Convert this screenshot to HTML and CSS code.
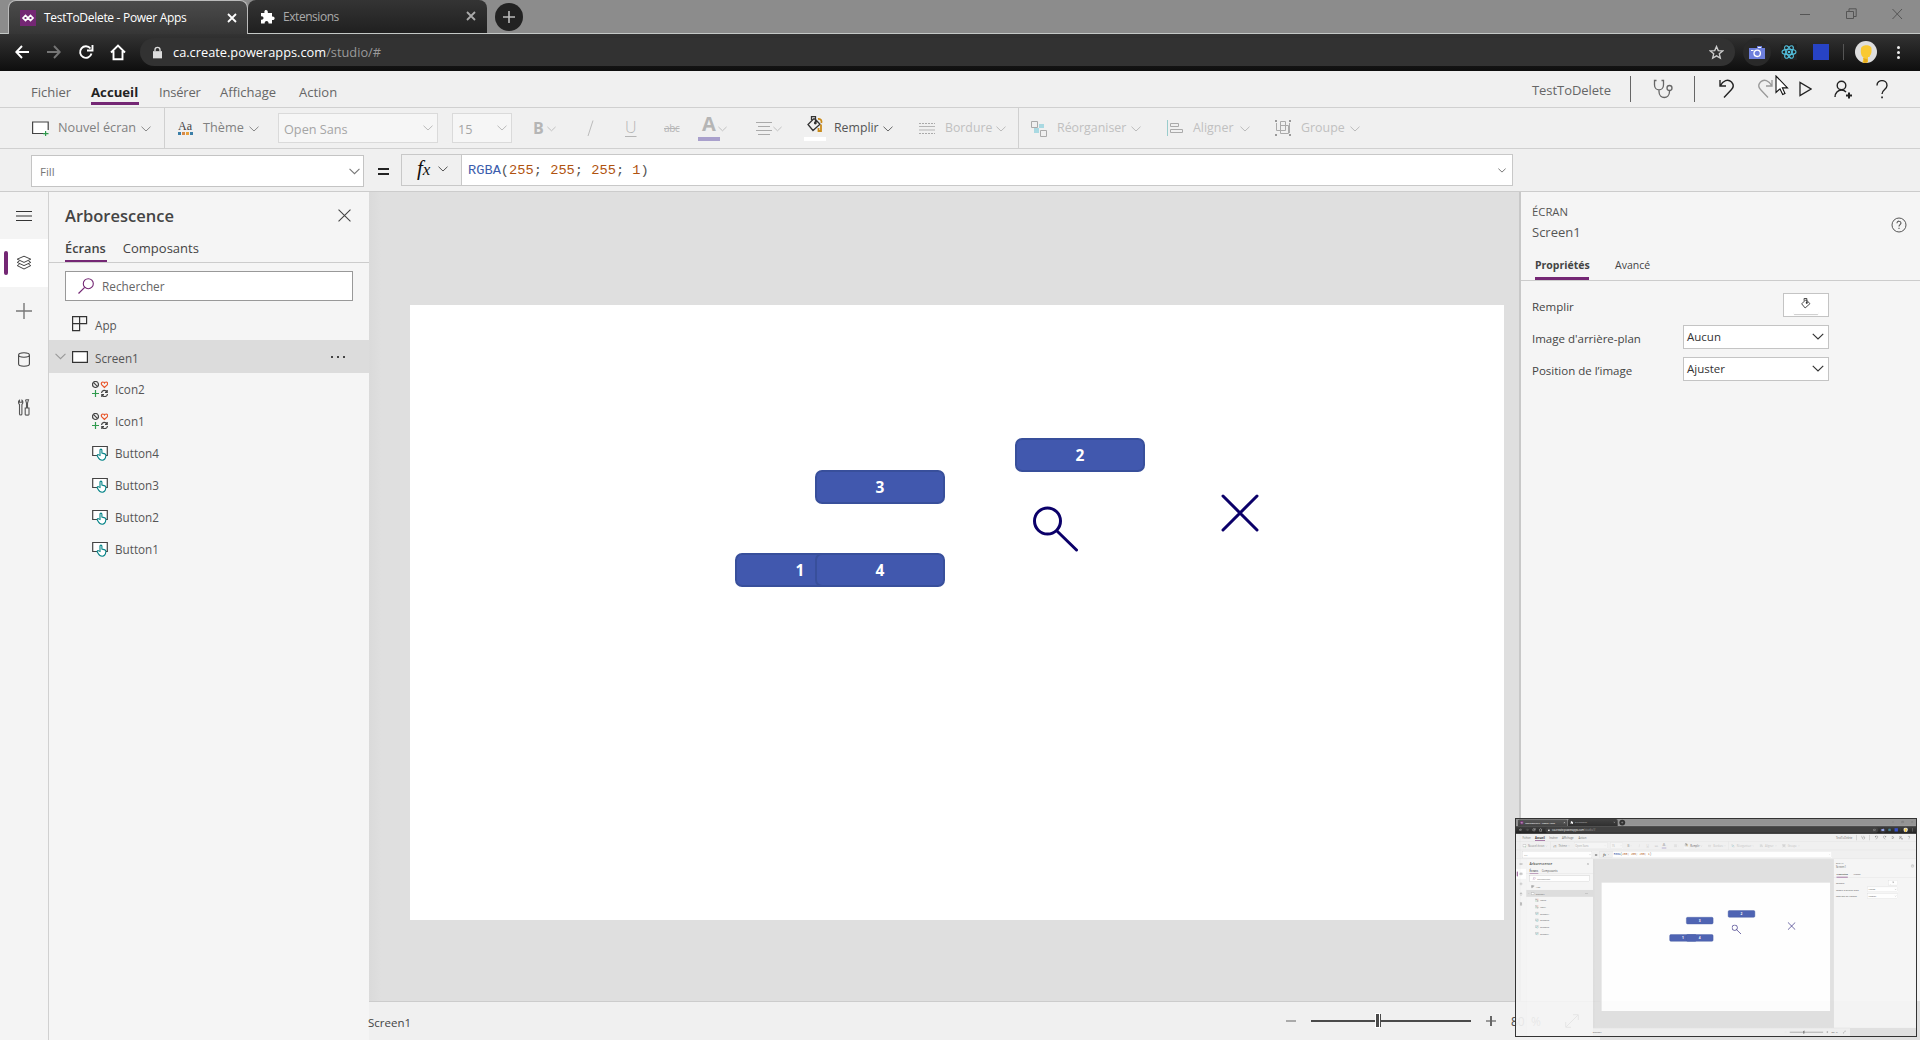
FILE: index.html
```html
<!DOCTYPE html>
<html lang="fr">
<head>
<meta charset="utf-8">
<title>TestToDelete - Power Apps</title>
<link rel="stylesheet" href="styles.css">
</head>
<body>
<svg class="defs" width="0" height="0">
  <symbol id="chev" viewBox="0 0 10 6"><path d="M.5.7 5 5 9.500.7" fill="none" stroke="currentColor" stroke-width="1"/></symbol>
  <symbol id="x" viewBox="0 0 12 12"><path d="M.5.5l11 11M11.500.5l-11 11" fill="none" stroke="currentColor" stroke-width="1"/></symbol>
  <symbol id="xb" viewBox="0 0 10 10"><path d="M1 1l8 8M9 1l-8 8" fill="none" stroke="currentColor" stroke-width="1.8"/></symbol>
  <symbol id="btn" viewBox="0 0 16 16"><path d="M6 10.500H.7V1.500h14.600v9H14" fill="#fff" stroke="#444" stroke-width="1.200"/><path d="M8 10.500V5.200c0-1.500 1.900-1.500 1.900 0V8l3 .9c1 .3 1.100 1 .9 2-.2 2.200-1 4.300-3.600 4.300-2.400 0-3.200-1.100-4-2.700l-1-1.700c-.3-1 .8-1.500 1.500-.9z" fill="#fff" stroke="#038387" stroke-width="1.100"/></symbol>
  <symbol id="ico" viewBox="0 0 16 16"><g fill="none" stroke-width="1.200"><circle cx="3.500" cy="3.500" r="3" stroke="#444"/><path d="M1.400 1.400l4.200 4.200" stroke="#444"/><path d="M12.500 6.500L9.600 3.600C8.900 2.500 9.700.9 11 1c.8 0 1.300.6 1.500 1 .2-.4.7-1 1.500-1 1.300-.1 2.100 1.500 1.400 2.600z" stroke="#e8562a"/><path d="M3.500 9v7M0 12.500h7" stroke="#2f9a4d"/><path d="M9.500 12c.4-3 4-3.500 5.500-1M15.200 9v2.300H13M15.500 13c-.4 3-4 3.500-5.500 1M9.800 16v-2.300H12" stroke="#444"/></g></symbol>
  <symbol id="bucket" viewBox="0 0 16 16"><path d="M4.500 4V.7h4V8M6.500 3L1 8.500l5 6 7-6.200-5-5.300z" fill="none" stroke="currentColor" stroke-width="1.300"/><circle cx="8.300" cy="7" r="1.400" fill="currentColor"/></symbol>
</svg>

<div class="app">
  <div class="titlebar">
    <div class="tab tab-on">
      <svg class="fav" width="16" height="16" viewBox="0 0 16 16"><rect width="16" height="16" fill="#742774"/><path d="M3 8l2.500-2.500L8 8l-2.500 2.500zM8 8l2.500-2.500L13 8l-2.500 2.500z" fill="none" stroke="#fff" stroke-width="1.700"/></svg>
      <span class="t-tab1">TestToDelete - Power Apps</span>
      <svg class="tab-x" width="10" height="10"><use href="#xb"/></svg>
    </div>
    <div class="tab tab-off">
      <svg width="15" height="15" viewBox="0 0 15 15"><path d="M1 4h3.500C3.500 0 8.500 0 7.800 4H12v3.500c3.500-.8 3.500 4.300 0 3.500V14.500H8.500c.6-3.500-4.400-3.500-3.800 0H1V10.800c3.300.6 3.300-4 0-3.400z" fill="#fff"/></svg>
      <span class="t-tab2">Extensions</span>
      <svg class="tab-x" width="10" height="10"><use href="#xb"/></svg>
    </div>
    <div class="newtab"><svg width="12" height="12" viewBox="0 0 12 12"><path d="M6 0v12M0 6h12" stroke="#bbb" stroke-width="1.600"/></svg></div>
    <svg class="winctl" width="104" height="12" viewBox="0 0 104 12"><g fill="none" stroke="#555"><path d="M0 6.500h10"/><path d="M46.500 3.500h7v7h-7zM49 3V.8h7.200v7.700H54"/><path d="M92.500 1l9.500 10M102 1l-9.500 10"/></g></svg>
  </div>

  <div class="navbar">
    <svg class="navicons" width="112" height="18" viewBox="0 0 112 18"><g fill="none" stroke-width="1.900"><path d="M14 9H1.500M7 3L1.300 9 7 15" stroke="#fff"/><path d="M32 9h12.500M39 3l5.700 6L39 15" stroke="#757575"/><path d="M75.500 5.500A5.800 5.800 0 1 0 76.500 10.500M77.500 2v5.500H72" stroke="#fff"/><path d="M96 9.500L103 2.500l7 7M98.500 8v8.300h9V8" stroke="#fff"/></g></svg>
    <div class="address">
      <svg width="9" height="13" viewBox="0 0 10 13"><path d="M0 5h10v8H0z" fill="#ddd"/><path d="M2.200 5V3.500c0-3.500 5.600-3.500 5.600 0V5" fill="none" stroke="#ddd" stroke-width="1.500"/></svg>
      <span class="t-url">ca.create.powerapps.com<i>/studio/#</i></span>
      <svg class="star" width="15" height="15" viewBox="0 0 24 24"><path d="M12 2.500l2.800 6.400 7 .6-5.300 4.600 1.600 6.900L12 17.300 5.900 21l1.600-6.900L2.200 9.500l7-.6z" fill="none" stroke="#ccc" stroke-width="2.200"/></svg>
    </div>
    <div class="camera"><svg width="16" height="13" viewBox="0 0 16 13"><path d="M0 2h8V0h5v2h3v11H0z" fill="#6d7fdc"/><circle cx="8.200" cy="7.300" r="3.200" fill="none" stroke="#fff" stroke-width="1.300"/><path d="M2 4.500h2.500M9 1.500h3" stroke="#fff"/></svg></div>
    <svg class="react" width="16" height="16" viewBox="-8 -8 16 16"><rect x="-8" y="-8" width="16" height="16" fill="#222"/><g fill="none" stroke="#53c1de" stroke-width="1.100"><ellipse rx="7" ry="2.700"/><ellipse rx="7" ry="2.700" transform="rotate(60)"/><ellipse rx="7" ry="2.700" transform="rotate(120)"/></g><circle r="1.300" fill="#53c1de"/></svg>
    <div class="bluesq"></div>
    <div class="navsep"></div>
    <svg class="avatar" width="22" height="22" viewBox="0 0 22 22"><circle cx="11" cy="11" r="11" fill="#dedede"/><path d="M6 8c0-5 11-5 10.500 0 .2 3-.2 5.500-1.500 6.500l-.5 1.500h-1.500v5c-2 1-4.500 1-5.500.5l1-5C6 15 5.500 11 6 8z" fill="#f9c932"/><path d="M8 17l1 2-.7 2.500c1.700.5 3 .2 4-.3l.2-3z" fill="#e5aa1c"/></svg>
    <div class="kebab"><b></b><b></b><b></b></div>
  </div>

  <div class="menubar">
    <span class="m1">Fichier</span><span class="m2">Accueil</span><span class="m3">Insérer</span><span class="m4">Affichage</span><span class="m5">Action</span>
    <span class="appname">TestToDelete</span>
    <div class="vbar"></div>
    <svg width="20" height="20" viewBox="0 0 20 20"><g fill="none" stroke="#666" stroke-width="1.300"><path d="M3.500 1.500H1.500v4.500c0 6.500 9 6.500 9 0V1.500h-2M6 11v1.500c0 8 10.500 8 10.500 0v-1"/><circle cx="16.500" cy="9" r="2.500"/></g></svg>
    <div class="vbar"></div>
    <svg width="16" height="20" viewBox="0 0 16 20"><path d="M1 1v6h6M1.200 6.800C4 1.500 9-.5 12.500 3c3.500 4 .5 7 0 7.500L5 18.500" fill="none" stroke="#222" stroke-width="1.400"/></svg>
    <svg class="redo" width="16" height="20" viewBox="0 0 16 20"><path d="M14 1v6H8M13.800 6.800C11 1.500 6-.5 2.500 3c-3.500 4-.5 7 0 7.500l7.500 8" fill="none" stroke="currentColor" stroke-width="1.300"/></svg>
    <svg width="13" height="16" viewBox="0 0 13 16"><path d="M1 1.500v13L12 8z" fill="none" stroke="#222" stroke-width="1.300"/></svg>
    <svg width="19" height="19" viewBox="0 0 19 19"><g fill="none" stroke="#222" stroke-width="1.400"><circle cx="7.500" cy="5.500" r="4.300"/><path d="M1 17c0-4 3-7 6.500-7 2 0 3.500.8 4.500 2.200"/><path d="M15 12.500v6M12 15.500h6" stroke-width="2"/></g></svg>
    <svg width="12" height="19" viewBox="0 0 12 19"><path d="M1 5.500c0-6.500 10-6.500 10 0 0 4-5 4-5 8.500" fill="none" stroke="#222" stroke-width="1.400"/><path d="M5.200 16.500h1.700v1.700H5.200z" fill="#222"/></svg>
    <svg class="cursor" width="14" height="21" viewBox="0 0 14 21"><path d="M1 1v16.500l4-3.700 2.700 5.700 2.300-1-2.600-5.600H12.500z" fill="#fff" stroke="#111" stroke-width="1.100"/></svg>
  </div>

  <div class="ribbon">
    <div class="grp g-new">
      <svg width="17" height="15" viewBox="0 0 17 15"><path d="M12 12.500H.6V1h15.600v8" fill="#fff" stroke="#444" stroke-width="1.200"/><path d="M13.600 10v5.500M11 12.700h5.500" stroke="#2f9a4d" stroke-width="1.200"/></svg>
      <span class="r-new">Nouvel écran</span><svg class="ch" width="10" height="6"><use href="#chev"/></svg>
    </div>
    <div class="grp g-fmt">
      <div class="aa"><span>Aa</span><div><b></b><b></b><b></b><b></b></div></div>
      <span class="r-theme">Thème</span><svg class="ch" width="10" height="6"><use href="#chev"/></svg>
      <div class="sel s-font"><span>Open Sans</span><svg class="ch" width="10" height="6"><use href="#chev"/></svg></div>
      <div class="sel s-size"><span>15</span><svg class="ch" width="10" height="6"><use href="#chev"/></svg></div>
      <div class="tool w1"><b class="bold">B</b><svg class="ch" width="9" height="6"><use href="#chev"/></svg></div>
      <div class="tool w2"><svg width="7" height="17"><path d="M6 .5L1 16" stroke="#bbb"/></svg></div>
      <div class="tool w3"><span class="und">U</span></div>
      <div class="tool w4"><s>abc</s></div>
      <div class="tool w5"><b class="fontcol">A</b><svg class="ch" width="9" height="6"><use href="#chev"/></svg></div>
      <div class="tool w6"><svg width="16" height="14"><path d="M0 1.500h16M2 5.500h12M0 9.500h16M2 13.500h12" stroke="#aaa"/></svg><svg class="ch" width="9" height="6"><use href="#chev"/></svg></div>
      <div class="fillico"><svg width="16" height="16" viewBox="0 0 16 16"><use href="#bucket"/><path d="M11 3c3-.5 4 2 3.300 4M14 8.500v6.500h-2.500v-3" fill="none" stroke="#c98b1c" stroke-width="1.800"/></svg></div>
      <span class="r-fill">Remplir</span><svg class="ch dark" width="10" height="6"><use href="#chev"/></svg>
      <svg class="bord" width="16" height="12"><path d="M0 .5h16M0 10.500h16" stroke="#aaa" stroke-dasharray="2 1"/><path d="M0 3.500h16M0 7h16" stroke="#b5b5b5"/></svg>
      <span class="r-bord">Bordure</span><svg class="ch" width="10" height="6"><use href="#chev"/></svg>
    </div>
    <div class="grp g-arr">
      <svg width="16" height="17" viewBox="0 0 16 17"><path d="M8 4h5v4H8zM3 8h5v5H3z" fill="#a9d9e2"/><path d="M.5 1.500h6v6h-6zM9.500 10.500h6v6h-6z" fill="#f0f0f0" stroke="#aaa"/></svg>
      <span class="r-reo">Réorganiser</span><svg class="ch" width="10" height="6"><use href="#chev"/></svg>
      <svg class="i2" width="16" height="16" viewBox="0 0 16 16"><path d="M.5 0v16" stroke="#9cc"/><path d="M3.500 3.500h8v3h-8zM3.500 9.500h12v3h-12z" fill="none" stroke="#aaa"/></svg>
      <span class="r-ali">Aligner</span><svg class="ch" width="10" height="6"><use href="#chev"/></svg>
      <svg class="i3" width="16" height="16" viewBox="0 0 16 16"><path d="M5.500 1.500h5v9h-5zM5.500 5.500h8v8h-8zM1.500 3v7.500h4M14.500 3v10" fill="none" stroke="#aaa"/><path d="M0 0h2v2H0zM14 0h2v2h-2zM0 14h2v2H0zM14 14h2v2h-2z" fill="#999"/></svg>
      <span class="r-grp">Groupe</span><svg class="ch" width="10" height="6"><use href="#chev"/></svg>
    </div>
  </div>

  <div class="formula">
    <div class="prop"><span>Fill</span><svg width="11" height="7"><use href="#chev"/></svg></div>
    <div class="eq"><b></b><b></b></div>
    <div class="fx"><em>f<small>x</small></em><svg width="10" height="6"><use href="#chev"/></svg></div>
    <div class="code"><span><i class="fn">RGBA</i>(<i>255</i>; <i>255</i>; <i>255</i>; <i>1</i>)</span><svg width="8" height="5"><use href="#chev"/></svg></div>
  </div>

  <div class="main">
    <div class="rail">
      <div><svg width="16" height="10"><path d="M0 .5h16M0 5h16M0 9.500h16" stroke="#333"/></svg></div>
      <div class="on"><svg width="16" height="16" viewBox="0 0 16 16"><g fill="none" stroke="#444" stroke-width="1"><path d="M8 1.200l6.800 3L8 7.400 1.200 4.200zM3.500 6L1.200 7.400 8 10.600l6.800-3.200L12.500 6M3.500 9.200l-2.300 1.400L8 14l6.800-3.400-2.300-1.400"/></g></svg></div>
      <div><svg width="16" height="16"><path d="M8 0v16M0 8h16" stroke="#777" stroke-width="1.400"/></svg></div>
      <div><svg width="12" height="15" viewBox="0 0 12 15"><path d="M.6 3v9c0 3 10.800 3 10.800 0V3M.6 3c0-3 10.800-3 10.800 0s-10.800 3-10.800 0z" fill="none" stroke="#444" stroke-width="1.100"/></svg></div>
      <div><svg width="12" height="17" viewBox="0 0 12 17"><g fill="none" stroke="#555" stroke-width="1.100"><path d="M1.500 1.200C0 2 .2 4.500 1.500 5.500V15c0 1.300 2.400 1.300 2.400 0V5.500C5.200 4.500 5.200 2 4 1.200v2H1.500zM7.500.8h3L9.500 4v5M7.500.8L8.500 4v5M7.200 9h3.800v6.500c0 1-3.800 1-3.800 0z"/></g></svg></div>
    </div>
    <div class="tree">
      <div class="thead"><h1>Arborescence</h1><svg width="13" height="13"><use href="#x"/></svg></div>
      <div class="ttabs"><span class="on t-ecr">Écrans</span><span class="t-comp">Composants</span></div>
      <div class="search"><svg width="16" height="16" viewBox="0 0 16 16"><circle cx="10.300" cy="5.700" r="5" fill="none" stroke="#742774" stroke-width="1.100"/><path d="M6.700 9.300L.5 15.500" stroke="#742774" stroke-width="1.200"/></svg><span>Rechercher</span></div>
      <div class="row app-row"><svg width="16" height="16" viewBox="0 0 16 16"><path d="M.6.6h14v7h-14zM.6 7.600v7h7V.6" fill="none" stroke="#333" stroke-width="1.200"/></svg><span>App</span></div>
      <div class="row sel-row"><svg class="exp" width="11" height="7"><use href="#chev"/></svg><svg width="16" height="12"><path d="M.6.6h14.800v10.800H.6z" fill="#fff" stroke="#333" stroke-width="1.200"/></svg><span class="t-s1">Screen1</span><div class="dots"><b></b><b></b><b></b></div></div>
      <div class="row kid"><svg width="16" height="16"><use href="#ico"/></svg><span>Icon2</span></div>
      <div class="row kid"><svg width="16" height="16"><use href="#ico"/></svg><span>Icon1</span></div>
      <div class="row kid"><svg width="16" height="16"><use href="#btn"/></svg><span>Button4</span></div>
      <div class="row kid"><svg width="16" height="16"><use href="#btn"/></svg><span>Button3</span></div>
      <div class="row kid"><svg width="16" height="16"><use href="#btn"/></svg><span>Button2</span></div>
      <div class="row kid"><svg width="16" height="16"><use href="#btn"/></svg><span>Button1</span></div>
    </div>
    <div class="work">
      <div class="upper">
        <div class="stage">
          <div class="screen">
            <div class="button b1">1</div><div class="button b2">2</div><div class="button b3">3</div><div class="button b4">4</div>
            <svg class="lens" width="46" height="46" viewBox="0 0 46 46"><circle cx="14.500" cy="15" r="13" fill="none" stroke="#0b0069" stroke-width="3"/><path d="M24 25l19.500 19" stroke="#0b0069" stroke-width="3" stroke-linecap="round"/></svg>
            <svg class="cross" width="38" height="38" viewBox="0 0 38 38"><path d="M2 2l34 34M36 2L2 36" stroke="#0b0069" stroke-width="3" stroke-linecap="round"/></svg>
          </div>
        </div>
        <div class="props">
          <div class="phead"><div><div class="kind">ÉCRAN</div><div class="pname">Screen1</div></div><svg width="16" height="16" viewBox="0 0 16 16"><circle cx="8" cy="8" r="7" fill="none" stroke="#555"/><path d="M6 6.300c0-3 4-2.600 4-.2C10 7.700 8 7.600 8 9.500M8 10.700v1.300" fill="none" stroke="#555" stroke-width="1.100"/></svg></div>
          <div class="ptabs"><span class="on">Propriétés</span><span class="t-av">Avancé</span></div>
          <div class="prow"><span class="p1">Remplir</span><div class="swatch"><svg width="11" height="11"><use href="#bucket"/></svg><b></b></div></div>
          <div class="prow"><span class="p2">Image d'arrière-plan</span><div class="psel"><span>Aucun</span><svg width="12" height="7"><use href="#chev"/></svg></div></div>
          <div class="prow"><span class="p3">Position de l’image</span><div class="psel"><span>Ajuster</span><svg width="12" height="7"><use href="#chev"/></svg></div></div>
        </div>
      </div>
      <div class="status">
        <div class="bar">
          <span class="t-st">Screen1</span>
          <svg class="minus" width="10" height="2"><path d="M0 1h10" stroke="#aaa" stroke-width="2"/></svg>
          <div class="track"><b></b></div>
          <svg class="plus" width="10" height="10"><path d="M0 5h10" stroke="#999" stroke-width="2"/><path d="M5 0v10" stroke="#666" stroke-width="2"/></svg>
          <span class="t-pct">80 &nbsp;%</span>
          <svg width="14" height="14" viewBox="0 0 14 14"><path d="M1 13L13 1M8 .7h5.300V6M.7 8v5.300H6" fill="none" stroke="#333"/></svg>
        </div>
      </div>
    </div>
  </div>
</div>

<div class="preview"></div>
<script src="preview.js"></script>
</body>
</html>
```
FILE: preview.js
```js
// Shows a miniature of the whole window in the preview box.
const mini = document.querySelector('.app').cloneNode(true);
mini.setAttribute('aria-hidden', 'true');
document.querySelector('.preview').appendChild(mini);
```
FILE: styles.css
```css
*{box-sizing:border-box}
body{margin:0;width:1920px;height:1040px;overflow:hidden;position:relative;font-family:"Open Sans","Noto Sans",sans-serif;font-size:12px;color:#444;background:#f0f0f0}
svg{display:block;flex:none}
.defs{position:absolute}
span{white-space:nowrap}
i{font-style:normal}
.app{width:1920px;height:1040px;display:flex;flex-direction:column;background:#f0f0f0}

.titlebar{height:34px;background:#8c8c8c;border-bottom:1px solid #c5c9c7;display:flex;padding-left:8px;flex:none}
.tab{height:33px;display:flex;align-items:center;border-radius:8px 8px 0 0}
.tab-on{width:240px;height:34px;padding-left:11px;background:linear-gradient(#4b4b4b,#363636);border:1px solid #bbb;border-bottom:0;color:#fff}
.tab-off{width:239px;padding:0 0 1px 12px;background:linear-gradient(#343434,#202020);color:#aaa}
.tab .fav{margin-right:8px}
.t-tab1{font-size:12px;letter-spacing:-.3px;width:183px}
.t-tab2{font-size:12px;letter-spacing:-.45px;width:183px;margin-left:8px}
.newtab{width:28px;height:28px;border-radius:50%;background:#222;margin:3px 0 0 8px;display:grid;place-items:center}
.winctl{margin:8px 16px 0 auto}
.navbar{height:37px;background:linear-gradient(#333,#0e0e0e);display:flex;align-items:center;padding:0 0 1px 15px;flex:none}
.navicons{width:112px}
.address{height:28px;width:1595px;margin-left:13px;border-radius:14px;background:#323232;display:flex;align-items:center;padding-left:13px}
.t-url{font-size:12.800px;color:#fff;margin-left:11px;letter-spacing:0}
.t-url{width:220px}
.t-url i{color:#9a9a9a}
.star{margin:0 11px 0 auto}
.camera{width:28px;height:28px;border-radius:50%;background:#292929;display:grid;place-items:center;margin-left:8px}
.react{margin-left:10px}
.bluesq{width:16px;height:16px;background:#2743c5;margin-left:16px}
.navsep{width:1px;height:16px;background:#555;margin-left:14px}
.avatar{margin-left:11px}
.kebab{display:grid;gap:2px;margin-left:20px}
.kebab b{width:3px;height:3px;border-radius:50%;background:#eee}

.menubar{height:37px;border-bottom:1px solid #d0d0d0;display:grid;grid-template-columns:60px 68px 61px 79px 1233px 98px 23px 41px 25px 39px 41px 35px 42px 1fr;padding-left:31px;align-items:center;color:#666;font-size:13px;position:relative;flex:none}
.menubar>span{line-height:20px;padding-top:5px}
.menubar .m2{color:#222;font-weight:700;border-bottom:3px solid #742774;justify-self:start;height:28px;line-height:31px;margin-top:3px;padding:0 1px 0 0;font-size:13.200px}
.menubar .m3{letter-spacing:-.2px}
.menubar .appname{letter-spacing:-.05px;padding-top:2px}
.vbar{width:1px;height:26px;background:#666}
.redo{color:#999}
.cursor{position:absolute;left:1775px;top:4px}

.ribbon{height:41px;border-bottom:1px solid #d0d0d0;display:flex;flex:none;font-size:12.700px;color:#999}
.grp{display:flex;align-items:center;border-right:1px solid #d0d0d0}
.grp>span{padding-bottom:2px}
.ch{color:#bbb;margin-top:2px}
.g-new .ch,.r-theme+.ch{color:#888}
.g-new{width:165px;padding-left:32px}
.r-new{width:83px;margin-left:9px}
.g-new .r-new,.r-theme{color:#808080}
.g-fmt{width:854px;padding-left:13px}
.aa{width:14px;font:12px/11px "Liberation Serif",serif;color:#444;display:grid}
.aa div{display:flex;gap:1px}
.aa b{width:3px;height:3px;background:#3b7fa8}.aa b:nth-child(2){background:#d58a49}.aa b:nth-child(3){background:#e8a03c}
.r-theme{width:46px;margin-left:11px}
.sel{height:30px;border:1px solid #dadada;background:#f6f6f6;display:flex;align-items:center;justify-content:space-between;padding:0 4px 0 5px;color:#a5a5a5;margin-top:-1px}
.sel span{padding-top:3px}
.sel .ch{margin-top:0}
.s-font{width:160px;margin-left:19px}
.s-size{width:60px;margin-left:14px}
.tool{display:flex;align-items:center;gap:4px;color:#b5b5b5;height:24px}
.w1{width:54px;margin-left:21px}.w2{width:39px}.w3{width:38px}.w4{width:38px}.w5{width:54px}.w6{width:48px;gap:1px}
.bold{font-size:16px;width:10px;padding-bottom:1px}
.und{font-size:16px;text-decoration:underline;text-underline-offset:3px;font-weight:300;padding-bottom:3px;margin-left:-1px}
.tool s{font-size:10px;letter-spacing:-.3px}
.fontcol{width:22px;height:28px;text-align:center;margin:-3px 0 0 -4px;border-bottom:4px solid #a9a0cc;font-size:20px;line-height:22px;flex:none}
.w5{gap:0}.w5 .ch{margin-left:-2px}
.w5,.w6{position:relative}
.fillico{width:22px;height:25px;padding-left:3px;border-bottom:4px solid #fff;color:#333}
.r-fill{width:49px;margin-left:8px;color:#555;font-size:12.300px}
.ch.dark{color:#666}
.bord{margin:1px 10px 0 26px}
.r-bord{width:51px;font-size:12.300px}
.r-bord,.g-arr{color:#c0c0c0}
.g-arr{border:0;padding-left:12px}
.r-reo{width:74px;margin-left:10px;font-size:12.400px}
.i2{margin:0 10px 0 26px}.r-ali{width:47px}
.i3{margin:0 10px 0 25px}.r-grp{width:49px;font-size:12.400px}
.r-ali{font-size:12.400px}

.formula{height:43px;border-bottom:1px solid #ccc;display:flex;padding:5px 0 0 31px;flex:none;align-items:flex-start}
.prop{width:333px;height:32px;margin-top:1px;border:1px solid #c4c4c4;background:#fff;display:flex;align-items:center;justify-content:space-between;padding:0 3px 0 8px;color:#777;font-size:11.500px}
.eq{width:11px;display:grid;gap:3px;margin:14px 12px 0 14px}
.eq b{height:2px;background:#222}
.fx{width:60px;height:32px;border:1px solid #c8c8c8;border-right:0;display:flex;align-items:center;gap:4px;padding:0 0 2px 15px;color:#555}
.fx em{font:italic 21px/26px "Liberation Serif",serif;color:#111;width:17px}
.fx small{font-size:17px}
.code{width:1052px;height:32px;border:1px solid #c8c8c8;background:#fff;display:flex;align-items:center;justify-content:space-between;padding:0 6px 0 6px;font:13.700px "Liberation Mono",monospace;color:#555}
.code i{color:#b0530f}.code .fn{color:#3c5dad}

.main{flex:1;display:flex;min-height:0}
.rail{width:49px;border-right:1px solid #d0d0d0;background:#f4f4f4}
.rail div{height:48px;display:grid;place-items:center;position:relative}
.rail div:first-child{height:47px}
.rail .on{background:#fff}
.rail .on::before{content:"";position:absolute;left:4px;top:12px;width:4px;height:24px;border-radius:2px;background:#742774}
.tree{width:320px;background:#f5f5f5}
.thead{height:46px;display:flex;align-items:center;justify-content:space-between;padding:1px 18px 0 16px}
h1{font-size:16.500px;font-weight:600;margin:0;color:#444}
.ttabs{height:25px;border-bottom:1px solid #ccc;display:flex;gap:16px;padding-left:16px;font-size:13px}
.ttabs span{height:24px;line-height:21px;padding-right:1px}
.ttabs .on{border-bottom:2px solid #742774;font-weight:600;font-size:12.800px}
.search{height:30px;margin:8px 16px 8px;border:1px solid #999;background:#fff;display:flex;align-items:center;gap:8px;padding-left:12px;color:#666;font-size:11.800px}
.row{height:32px;display:flex;align-items:center;gap:7px;padding-left:23px;color:#555;font-size:11.700px}
.row>span{padding-top:2px}
.app-row{padding-bottom:1px;height:31px}
.sel-row{background:#dcdcdc;height:33px;padding:0 24px 0 6px}
.exp{color:#999;margin-right:-1px}
.dots{display:flex;gap:4px;margin-left:auto}
.dots b{width:2px;height:2px;background:#444}
.kid{padding-left:43px}
.kid>span{padding-top:0}
.work{width:1551px;display:flex;flex-direction:column}
.upper{flex:1;display:flex;min-height:0}
.stage{width:1150px;background:linear-gradient(90deg,#dadada,#dfdfdf 12px);padding:113px 0 0 41px}
.screen{width:1094px;height:615px;background:#fff;position:relative}
.button{position:absolute;width:130px;height:34px;border:2px solid #384f9b;border-radius:7px;background:#4158ae;color:#fff;font-size:15.500px;font-weight:700;line-height:30px;text-align:center}
.b1{left:325px;top:248px}.b2{left:605px;top:133px}.b3{left:405px;top:165px}.b4{left:405px;top:248px}
.lens{position:absolute;left:623px;top:201px}
.cross{position:absolute;left:811px;top:189px}
.props{width:401px;border-left:2px solid #c8c8c8;background:#f5f5f5}
.phead{height:63px;display:flex;justify-content:space-between;padding:10px 13px 0 11px;color:#555}
.phead svg{margin-top:15px}
.kind{font-size:11.300px;line-height:20px}
.pname{font-size:13px;line-height:21px}
.ptabs{height:26px;border-bottom:1px solid #ccc;display:flex;gap:26px;padding-left:14px;font-size:11px;margin-bottom:9px}
.ptabs span{height:25px;line-height:20px}
.ptabs .on{font-weight:700;border-bottom:3px solid #742774;width:54px;font-size:10.500px}
.t-av{font-size:10.500px}
.prow{height:32px;display:flex;justify-content:space-between;align-items:center;padding:0 91px 3px 12px}
.prow>span{padding-top:3px;font-size:11.500px}
.p1,.p2,.p3{margin-left:-1px}
.swatch{width:46px;height:24px;border:1px solid #c4c4c4;background:#fff;display:grid;justify-items:center;padding-top:4px;color:#333}
.swatch b{width:24px;height:3px;box-shadow:0 1px 1px #ccc}
.psel{width:146px;height:24px;border:1px solid #c4c4c4;background:#fff;display:flex;align-items:center;justify-content:space-between;padding:0 4px 0 3px;color:#333;font-size:11.500px}
.status{height:39px;background:#e0e0e0}
.bar{width:1231px;height:39px;border-top:1px solid #ccc;background:#f0f0f0;display:flex;align-items:center}
.t-st{width:917px;text-indent:-1px;padding-top:2px;font-size:11.500px}
.track{width:160px;height:2px;background:#4a4a4a;margin:0 15px;position:relative}
.track b{position:absolute;left:64px;top:-7px;width:5px;height:15px;background:#4a4a4a;border:1px solid #fff;box-shadow:2px 0 0 -1px #4a4a4a}
.t-pct{width:54px;margin-left:15px;font-size:12px}

.preview{position:absolute;left:1515px;top:818px;width:402px;height:219px;border:1px solid #333;overflow:hidden}
.preview .app{transform:scale(.2088,.2087);transform-origin:0 0;opacity:.92}
.preview .redo{color:#222}
.preview .cursor{display:none}
.preview .cross{left:891px}
```
